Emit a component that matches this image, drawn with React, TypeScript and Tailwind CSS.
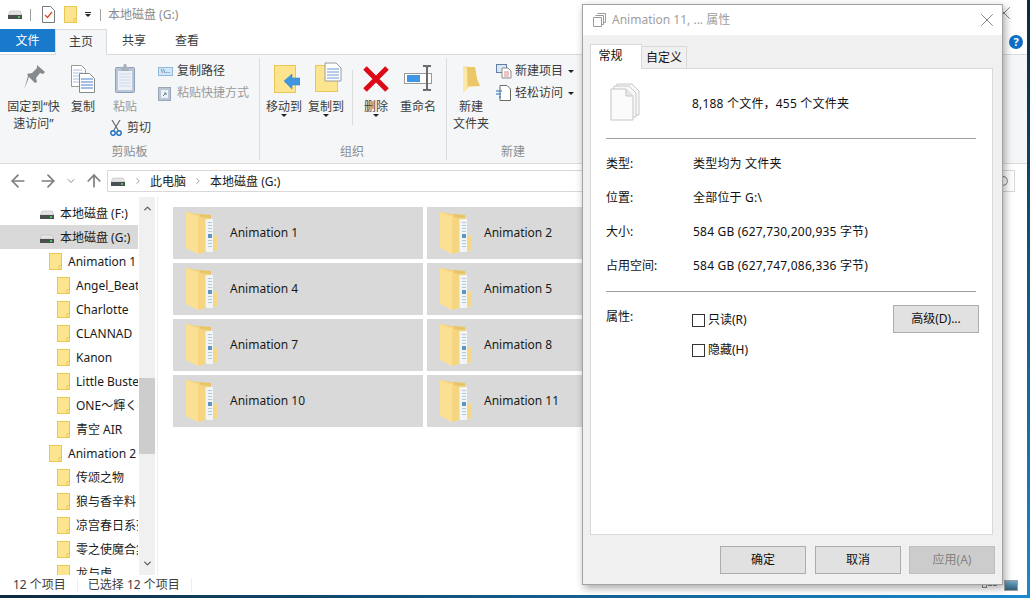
import type { ReactNode } from "react";
import { ArrowLeft, ArrowRight, ArrowUp, ChevronDown, ChevronRight, ChevronUp, Search, X } from "lucide-react";

const FONT = "font-['Noto_Sans','Noto_Sans_CJK_SC',sans-serif]";

function Drive({ className = "" }: { className?: string }) {
  return (
    <svg width="14" height="10" viewBox="0 0 14 10" className={className}>
      <path d="M2 1h10l2 4H0z" fill="#e4e4e4" stroke="#b5b5b5" strokeWidth="0.5" />
      <rect x="0" y="5" width="14" height="4" fill="#4a4f52" />
      <rect x="10" y="6" width="2" height="2" fill="#3fd24a" />
    </svg>
  );
}

function SmallFolder() {
  return (
    <svg width="13" height="17" viewBox="0 0 13 17" className="shrink-0">
      <rect x="0.5" y="0.5" width="12" height="16" fill="#fde58f" stroke="#eac654" />
      <path d="M10 16.5v-4h2.5" fill="none" stroke="#eac654" />
    </svg>
  );
}

function BigFolder() {
  return (
    <svg width="32" height="44" viewBox="0 0 32 44" className="shrink-0">
      <path d="M1 1l12 2 13 1v32L1 34z" fill="#f3d27c" />
      <path d="M26 4l-12-1 2 3 10 1z" fill="#e6c468" />
      <path d="M18 8l9 1v32l-9-2z" fill="#fde6a2" />
      <path d="M21 8h7v33h-7z" fill="#f1f4f5" />
      <path d="M23 11h4v1h-4zm0 3h4v1h-4zm0 3h4v1h-4zm0 3h4v1h-4zm0 9h4v1h-4zm0 3h4v1h-4zm0 3h4v1h-4z" fill="#b5c9d6" />
      <path d="M23 23h4v4h-4z" fill="#5f96bf" />
      <path d="M28 24l4 1v14l-4 2z" fill="#f4d789" />
      <path d="M1 1l12 4v38L1 37z" fill="#fbe094" />
      <path d="M13 5l7 3v33l-7 2z" fill="#f5d57f" />
    </svg>
  );
}

function RibbonIcon({ name }: { name: string }) {
  if (name === "pin") {
    return (
      <svg width="22" height="23" viewBox="0 0 22 23" className="mb-[5px]">
        <path d="M14 0l8 7-2 2-3-1-4 5 1 4-2 1-6-6-5 13 4-14-1-2 5-1 5-5z" fill="#858a8e" />
      </svg>
    );
  }
  if (name === "copy") {
    return (
      <svg width="24" height="28" viewBox="0 0 24 28">
        <path d="M0.5 0.5h10l4 4v17h-14z" fill="#fff" stroke="#9a9a9a" />
        <path d="M2 5h9M2 8h10M2 11h10M2 14h10M2 17h10" stroke="#a9c2e4" />
        <path d="M8.5 8.5h10l5 5v14h-15z" fill="#fff" stroke="#8a8a8a" />
        <path d="M10 14h12M10 17h12M10 20h12M10 23h12" stroke="#4a7fd0" />
      </svg>
    );
  }
  if (name === "paste") {
    return (
      <svg width="20" height="29" viewBox="0 0 20 29">
        <rect x="0.5" y="3.5" width="19" height="25" rx="1" fill="#b9c6d6" stroke="#8e9db8" />
        <rect x="3" y="7" width="14" height="19" fill="#eef2f8" />
        <path d="M4 10h12M4 13h12M4 16h12M4 19h12M4 22h12" stroke="#cdd6e3" />
        <path d="M6 3h2l1-3h2l1 3h2v4H6z" fill="#a8b2bf" />
      </svg>
    );
  }
  if (name === "move") {
    return (
      <svg width="26" height="28" viewBox="0 0 26 28" className="ml-[5px]">
        <rect x="0.5" y="0.5" width="21" height="27" fill="#fde58f" stroke="#eac654" />
        <path d="M10 16l8-7v4h8v7h-8v4z" fill="#3f97df" stroke="#2c7fc4" strokeWidth="0.5" />
      </svg>
    );
  }
  if (name === "copyto") {
    return (
      <svg width="27" height="31" viewBox="0 0 27 31" className="ml-[5px]">
        <rect x="0.5" y="3.5" width="22" height="26" fill="#fde58f" stroke="#eac654" />
        <path d="M10 1h11l5 5v13H10z" fill="#fff" stroke="#9a9a9a" />
        <path d="M12 7h12M12 10h12M12 13h12M12 16h12" stroke="#6f98d6" />
      </svg>
    );
  }
  if (name === "delete") {
    return (
      <svg width="26" height="26" viewBox="0 0 26 26" className="mb-[1px]">
        <path d="M2 2l22 22M24 2L2 24" stroke="#dc0a17" strokeWidth="5" />
      </svg>
    );
  }
  if (name === "rename") {
    return (
      <svg width="28" height="26" viewBox="0 0 28 26" className="mb-[2px]">
        <rect x="0.5" y="8.5" width="27" height="10" fill="#fff" stroke="#9a9a9a" />
        <rect x="3" y="10" width="13" height="7" fill="#3e97e3" />
        <path d="M19 1h3l1 1 1-1h3M23 2v22M19 25h3l1-1 1 1h3" fill="none" stroke="#6b6b6b" strokeWidth="2" />
      </svg>
    );
  }
  return (
    <svg width="18" height="27" viewBox="0 0 18 27">
      <path d="M1 0l6 1h6l2 12 3 7-11 1-6 6z" fill="#f9dc89" />
      <path d="M5 1h8l2 12 3 7H6z" fill="#eac767" />
      <path d="M1 0l4 3v20l-4 4z" fill="#fde8a9" />
    </svg>
  );
}

function BigButton({ icon, lines, width, caret = false, muted = false }: { icon: string; lines: string[]; width: string; caret?: boolean; muted?: boolean }) {
  return (
    <div className={`flex flex-col items-center ${width}`}>
      <div className="flex h-[35px] items-end justify-center">
        <RibbonIcon name={icon} />
      </div>
      <div className={`mt-[5px] text-center leading-[17px] whitespace-nowrap ${muted ? "text-[#9a9a9a]" : "text-[#3c3c3c]"}`}>
        {lines.map((l) => (
          <div key={l}>{l}</div>
        ))}
      </div>
      {caret && <div className="-mt-[1px] h-0 w-0 border-x-[3px] border-t-[3px] border-x-transparent border-t-[#222]" />}
    </div>
  );
}

function SmallButton({ icon, label, caret = false, muted = false }: { icon: ReactNode; label: string; caret?: boolean; muted?: boolean }) {
  return (
    <div className="flex h-[22px] items-center">
      <div className="flex w-[19px] shrink-0 justify-start">{icon}</div>
      <span className={`whitespace-nowrap ${muted ? "text-[#9a9a9a]" : "text-[#3c3c3c]"}`}>{label}</span>
      {caret && <div className="ml-[5px] h-0 w-0 border-x-[3px] border-t-[3px] border-x-transparent border-t-[#222]" />}
    </div>
  );
}

function RibbonGroup({ label, width, labelPad = "", children }: { label: string; width: string; labelPad?: string; children: ReactNode }) {
  return (
    <div className={`flex h-[102px] shrink-0 flex-col border-r border-[#dcdcdc] ${width}`}>
      <div className="flex h-[84px] items-start">{children}</div>
      <div className={`mt-auto text-center leading-[16px] text-[#8d8d8d] ${labelPad}`}>{label}</div>
    </div>
  );
}

const TREE: { label: string; depth: 0 | 1 | 2; selected?: boolean }[] = [
  { label: "本地磁盘 (F:)", depth: 0 },
  { label: "本地磁盘 (G:)", depth: 0, selected: true },
  { label: "Animation 1", depth: 1 },
  { label: "Angel_Beats", depth: 2 },
  { label: "Charlotte", depth: 2 },
  { label: "CLANNAD", depth: 2 },
  { label: "Kanon", depth: 2 },
  { label: "Little Busters", depth: 2 },
  { label: "ONE～輝く季節へ", depth: 2 },
  { label: "青空 AIR", depth: 2 },
  { label: "Animation 2", depth: 1 },
  { label: "传颂之物", depth: 2 },
  { label: "狼与香辛料", depth: 2 },
  { label: "凉宫春日系列", depth: 2 },
  { label: "零之使魔合集", depth: 2 },
  { label: "龙与虎", depth: 2 },
];

const TILES = [1, 2, 4, 5, 7, 8, 10, 11];

function TreeRow({ label, depth, selected }: { label: string; depth: 0 | 1 | 2; selected?: boolean }) {
  const pad = depth === 0 ? "pl-[40px]" : depth === 1 ? "pl-[49px]" : "pl-[57px]";
  return (
    <div className={`flex h-[24px] w-[138px] shrink-0 items-center gap-[6px] overflow-hidden whitespace-nowrap text-[#1a1a1a] ${pad} ${selected ? "bg-[#d9d9d9]" : ""}`}>
      {depth === 0 ? <Drive className="mt-[3px] shrink-0" /> : <SmallFolder />}
      <span className="pt-[1px]">{label}</span>
    </div>
  );
}

function Tile({ label }: { label: string }) {
  return (
    <div className="flex h-[52px] items-center bg-[#d9d9d9] pl-[12px]">
      <BigFolder />
      <span className="ml-[13px] text-[#1a1a1a]">{label}</span>
    </div>
  );
}

function Explorer() {
  return (
    <div className="flex h-[595px] w-[1027px] flex-col bg-white text-[12px]">
      {/* title bar */}
      <div className="flex h-[29px] shrink-0 items-center pl-[8px]">
        <Drive />
        <div className="ml-[8px] h-[12px] w-px bg-[#a0a0a0]" />
        <svg width="13" height="17" viewBox="0 0 13 17" className="ml-[11px]">
          <path d="M0.5 0.5h8l4 4v12h-12z" fill="#fff" stroke="#7a7a7a" />
          <path d="M3 9l2.5 2.5L10 6" fill="none" stroke="#e0452d" strokeWidth="1.3" />
        </svg>
        <div className="ml-[9px]">
          <SmallFolder />
        </div>
        <div className="ml-[8px] flex flex-col items-center gap-[1px]">
          <div className="h-px w-[6px] bg-[#222]" />
          <div className="h-0 w-0 border-x-[3px] border-t-[3px] border-x-transparent border-t-[#222]" />
        </div>
        <div className="ml-[9px] h-[12px] w-px bg-[#a0a0a0]" />
        <span className="ml-[7px] text-[#8c8c8c]">本地磁盘 (G:)</span>
        <X className="mb-[3px] ml-auto mr-[12px] size-[22px] text-[#7a7a7a]" strokeWidth={1} />
      </div>
      {/* tabs */}
      <div className="flex h-[26px] shrink-0 border-b border-[#dadbdc]">
        <div className="flex h-[23px] w-[55px] items-center justify-center bg-[#1979ca] pt-[1px] text-white">文件</div>
        <div className="z-10 flex h-[26px] w-[52px] items-center justify-center border-x border-t border-[#dadbdc] bg-[#f5f6f7] pb-[2px] text-[#3c3c3c]">主页</div>
        <div className="flex h-[23px] w-[54px] items-center justify-center pt-[1px] text-[#3c3c3c]">共享</div>
        <div className="flex h-[23px] w-[52px] items-center justify-center pt-[1px] text-[#3c3c3c]">查看</div>
        <div className="ml-auto mr-[4px] mt-[6px] flex size-[14px] items-center justify-center rounded-full bg-[#0f6fc6] text-[11px] font-bold text-white">?</div>
      </div>
      {/* ribbon */}
      <div className="flex h-[109px] shrink-0 items-start border-b border-[#dadbdc] bg-[#f5f6f7] pt-[3px]">
        <RibbonGroup label="剪贴板" width="w-[260px]">
          <BigButton icon="pin" lines={["固定到“快", "速访问”"]} width="w-[62px] pl-[5px]" />
          <BigButton icon="copy" lines={["复制"]} width="w-[42px]" />
          <div className="flex w-[42px] flex-col">
            <BigButton icon="paste" lines={["粘贴"]} width="w-[42px]" muted />
            <div className="ml-[6px] mt-[5px] flex h-[16px] items-center gap-[5px] whitespace-nowrap text-[#3c3c3c]">
              <svg width="12" height="16" viewBox="0 0 12 16" className="shrink-0">
                <path d="M2 0l6 10M10 0L4 10" stroke="#6b6b6b" strokeWidth="1.2" />
                <circle cx="3" cy="13" r="2.2" fill="none" stroke="#1c6fc0" strokeWidth="1.4" />
                <circle cx="9" cy="13" r="2.2" fill="none" stroke="#1c6fc0" strokeWidth="1.4" />
              </svg>
              剪切
            </div>
          </div>
          <div className="pl-[12px] pt-[2px]">
            <SmallButton
              label="复制路径"
              icon={
                <div className="flex h-[9px] w-[15px] items-center justify-center border border-[#8fb8df] bg-[#d3e6f7] text-[6px] leading-none text-[#1b4a7a]">\\...</div>
              }
            />
            <SmallButton
              label="粘贴快捷方式"
              muted
              icon={
                <svg width="13" height="15" viewBox="0 0 13 15">
                  <rect x="0.5" y="1.5" width="12" height="13" fill="#b9c6d6" stroke="#9aa6b6" />
                  <rect x="3" y="4" width="7" height="8" fill="#eef2f8" />
                  <path d="M5 10l3-3M6 7h2v2" fill="none" stroke="#6f7c8c" />
                </svg>
              }
            />
          </div>
        </RibbonGroup>
        <RibbonGroup label="组织" width="w-[187px]" labelPad="pr-[2px]">
          <BigButton icon="move" lines={["移动到"]} width="w-[50px] -ml-[1px]" caret />
          <BigButton icon="copyto" lines={["复制到"]} width="w-[34px]" caret />
          <div className="ml-[9px] mt-[12px] h-[55px] w-px shrink-0 bg-[#dcdcdc]" />
          <BigButton icon="delete" lines={["删除"]} width="w-[46px]" caret />
          <BigButton icon="rename" lines={["重命名"]} width="w-[38px]" />
        </RibbonGroup>
        <div className="flex h-[102px] flex-1 flex-col">
          <div className="flex h-[84px] items-start">
            <BigButton icon="folder" lines={["新建", "文件夹"]} width="w-[48px]" />
            <div className="pl-[1px] pt-[2px]">
              <SmallButton
                label="新建项目"
                caret
                icon={
                  <svg width="16" height="15" viewBox="0 0 16 15">
                    <rect x="0.5" y="0.5" width="10" height="8" fill="#d9e7f5" stroke="#5f7fa6" />
                    <path d="M6 4h6l3 3v7H6z" fill="#fff" stroke="#8a8a8a" />
                    <path d="M8 8h5M8 10h5M8 12h5" stroke="#d98a8a" />
                  </svg>
                }
              />
              <SmallButton
                label="轻松访问"
                caret
                icon={
                  <svg width="15" height="16" viewBox="0 0 15 16">
                    <path d="M4 0.5h7l3.5 3.5v11.5H4z" fill="#fff" stroke="#6b6b6b" />
                    <path d="M0 6h6M0 9h5M3 12h2" stroke="#1c6fc0" strokeWidth="1.2" />
                  </svg>
                }
              />
            </div>
          </div>
          <div className="mt-auto w-[132px] text-center leading-[16px] text-[#8d8d8d]">新建</div>
        </div>
      </div>
      {/* address row */}
      <div className="flex h-[33px] shrink-0 items-center pl-[8px] pt-[1px]">
        <ArrowLeft className="size-[20px] text-[#7d7d7d]" strokeWidth={2} />
        <ArrowRight className="ml-[10px] size-[20px] text-[#7d7d7d]" strokeWidth={2} />
        <ChevronDown className="ml-[7px] size-[12px] text-[#8d8d8d]" strokeWidth={2} />
        <ArrowUp className="ml-[7px] size-[20px] text-[#7d7d7d]" strokeWidth={2} />
        <div className="ml-[3px] flex h-[22px] w-[908px] items-center border border-[#d9d9d9] pl-[3px] text-[#1a1a1a]">
          <Drive className="mt-[2px]" />
          <ChevronRight className="ml-[8px] size-[10px] text-[#8d8d8d]" strokeWidth={2} />
          <span className="ml-[7px] pt-[1px]">此电脑</span>
          <ChevronRight className="ml-[7px] size-[10px] text-[#8d8d8d]" strokeWidth={2} />
          <span className="ml-[7px] pt-[1px]">本地磁盘 (G:)</span>
          <Search className="ml-auto mr-[5px] size-[13px] -scale-x-100 text-[#8d8d8d]" strokeWidth={2} />
        </div>
      </div>
      {/* body */}
      <div className="flex min-h-0 flex-1">
        <div className="flex w-[158px] shrink-0 border-r border-[#eeeeee]">
          <div className="flex h-full w-[139px] flex-col overflow-hidden pt-[4px]">
            {TREE.map((t) => (
              <TreeRow key={t.label} {...t} />
            ))}
          </div>
          <div className="flex h-full w-[16px] flex-col items-center bg-[#f0f0f0] py-[6px]">
            <ChevronUp className="size-[11px] text-[#606060]" strokeWidth={3} />
            <div className="mt-[164px] h-[76px] w-full bg-[#cdcdcd]" />
            <ChevronDown className="mt-auto size-[11px] text-[#606060]" strokeWidth={3} />
          </div>
        </div>
        <div className="grid flex-1 grid-cols-[250px_250px] content-start gap-[4px] overflow-hidden pl-[15px] pt-[10px]">
          {TILES.map((n) => (
            <Tile key={n} label={`Animation ${n}`} />
          ))}
        </div>
      </div>
      {/* status bar */}
      <div className="flex h-[20px] shrink-0 items-center pl-[13px] text-[#3c3c3c]">
        <span>12 个项目</span>
        <div className="ml-[11px] h-[14px] w-px bg-[#efefef]" />
        <span className="ml-[10px]">已选择 12 个项目</span>
        <div className="ml-[11px] h-[14px] w-px bg-[#efefef]" />
        <div className="ml-auto mr-[9px] flex items-center">
          <div className="flex h-[11px] w-[16px] items-center gap-[1px] self-end">
            <div className="size-[5px] border border-[#8a8a8a]" />
            <div className="h-px w-[4px] bg-[#8a8a8a]" />
            <div className="h-px w-[4px] bg-[#8a8a8a]" />
          </div>
          <div className="ml-[6px] h-[11px] w-[14px] border border-[#a0a0a0] bg-[linear-gradient(#6fa8c8,#2f5f7a)]" />
        </div>
      </div>
    </div>
  );
}

function PropRow({ label, value }: { label: string; value: string }) {
  return (
    <div className="grid h-[34px] grid-cols-[87px_1fr] items-center">
      <span>{label}</span>
      <span className="tracking-[0.2px]">{value}</span>
    </div>
  );
}

function Check({ label }: { label: string }) {
  return (
    <div className="flex h-[30px] items-center">
      <div className="size-[13px] border border-[#333] bg-white" />
      <span className="ml-[3px]">{label}</span>
    </div>
  );
}

function DlgButton({ label, disabled = false }: { label: string; disabled?: boolean }) {
  return (
    <div className={`flex h-[28px] w-[86px] items-center justify-center border ${disabled ? "border-[#bfbfbf] bg-[#cccccc] text-[#838383]" : "border-[#adadad] bg-[#e1e1e1] text-[#111]"}`}>
      {label}
    </div>
  );
}

function PropertiesDialog() {
  return (
    <div className="absolute left-[582px] top-[4px] flex h-[581px] w-[421px] flex-col border border-[#a3a3a3] bg-[#f0f0f0] text-[12px] text-[#111] shadow-[2px_3px_8px_rgba(0,0,0,0.35)]">
      <div className="flex h-[30px] shrink-0 items-center bg-white pl-[10px] pr-[4px]">
        <svg width="13" height="14" viewBox="0 0 13 14">
          <path d="M4.5 0.5h8v9h-2M2.5 2.5h8v9h-2" fill="#fff" stroke="#9a9a9a" />
          <path d="M0.5 4.5h8v9h-8z" fill="#fff" stroke="#9a9a9a" />
        </svg>
        <span className="ml-[6px] text-[#a0a0a0]">Animation 11, ... 属性</span>
        <X className="ml-auto size-[22px] text-[#7d7d7d]" strokeWidth={1} />
      </div>
      <div className="flex h-[33px] shrink-0 items-end pl-[7px]">
        <div className="z-10 -mb-px flex h-[25px] w-[52px] items-center justify-center border border-b-0 border-[#d9d9d9] bg-white pb-[2px] pr-[11px]">常规</div>
        <div className="flex h-[22px] w-[45px] items-center justify-center border border-b-0 border-l-0 border-[#d9d9d9]">自定义</div>
      </div>
      <div className="ml-[7px] flex h-[467px] w-[403px] shrink-0 flex-col border border-[#d9d9d9] bg-white pl-[15px] pr-[16px]">
        <div className="flex h-[70px] shrink-0 items-center border-b border-[#a0a0a0]">
          <svg width="32" height="38" viewBox="0 0 32 38" className="ml-[4px] mt-[-3px] shrink-0">
            <path d="M7 1h15l7 7v24H7z" fill="#f8f8f8" stroke="#c8c8c8" />
            <path d="M4 3h15l7 7v24H4z" fill="#f8f8f8" stroke="#c8c8c8" />
            <path d="M1 6h15l7 7v24H1z" fill="#fbfbfb" stroke="#c4c4c4" />
            <path d="M16 6v7h7" fill="#e8e8e8" stroke="#c4c4c4" />
          </svg>
          <span className="ml-[50px] tracking-[0.2px]">8,188 个文件，455 个文件夹</span>
        </div>
        <div className="shrink-0 border-b border-[#a0a0a0] pb-[8px] pt-[8px]">
          <PropRow label="类型:" value="类型均为 文件夹" />
          <PropRow label="位置:" value="全部位于 G:\" />
          <PropRow label="大小:" value="584 GB (627,730,200,935 字节)" />
          <PropRow label="占用空间:" value="584 GB (627,747,086,336 字节)" />
        </div>
        <div className="flex pt-[13px]">
          <span className="mt-[3px] w-[86px]">属性:</span>
          <div>
            <Check label="只读(R)" />
            <Check label="隐藏(H)" />
          </div>
          <div className="ml-auto mr-[-3px]">
            <DlgButton label="高级(D)..." />
          </div>
        </div>
      </div>
      <div className="flex justify-end pr-[7px] pt-[11px]">
        <DlgButton label="确定" />
        <div className="ml-[9px]">
          <DlgButton label="取消" />
        </div>
        <div className="ml-[8px]">
          <DlgButton label="应用(A)" disabled />
        </div>
      </div>
    </div>
  );
}

export default function App() {
  return (
    <div className={`relative h-[598px] w-[1030px] overflow-hidden bg-[radial-gradient(ellipse_1030px_598px_at_100%_100%,#1a8ad0,#0c2a40)] ${FONT}`}>
      <Explorer />
      <PropertiesDialog />
    </div>
  );
}
